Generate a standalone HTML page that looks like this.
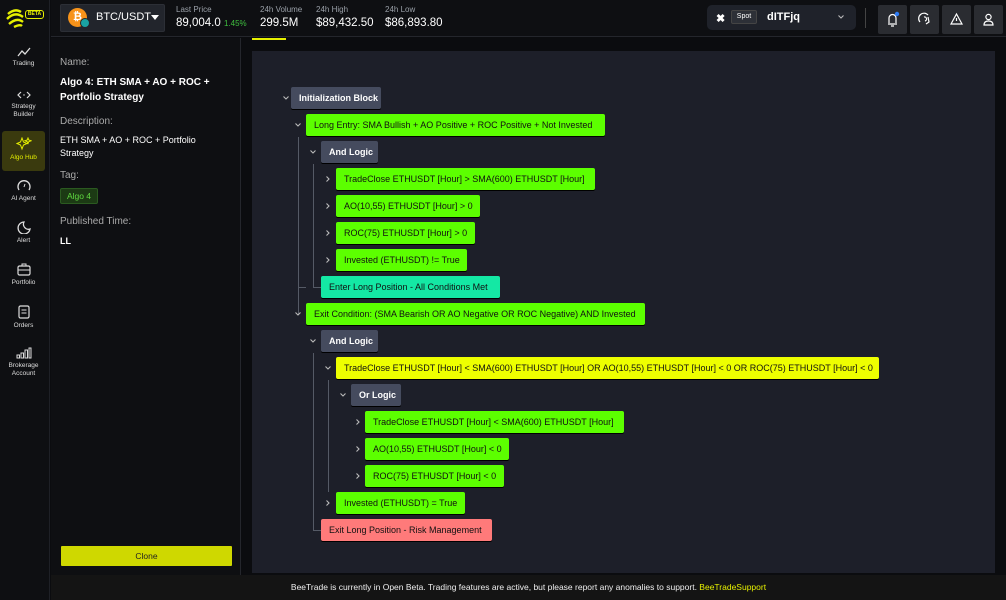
<!DOCTYPE html>
<html><head><meta charset="utf-8"><style>
*{box-sizing:border-box;margin:0;padding:0}
body{width:1006px;height:600px;background:#0b0c0f;font-family:"Liberation Sans",sans-serif;color:#fff;position:relative;overflow:hidden}
.abs{position:absolute}
.side{left:0;top:0;width:50px;height:600px;background:#0e0f12;border-right:1px solid #1e2026}
.nav{position:absolute;left:2px;width:43px;text-align:center;font-size:6.5px;color:#ddd;line-height:8px}
.nav svg{display:block;margin:0 auto 3px}
.top{left:51px;top:0;width:955px;height:37px;background:#0e0f12;border-bottom:1px solid #24262c}
.lbl{font-size:8px;color:#9aa0a8}
.val{font-size:11.5px;color:#fff}
.node{position:absolute;height:22px;border-radius:2px;font-size:9px;line-height:22px;padding-left:8px;color:#111;box-shadow:0 1px 0 #000}
.g{background:#5cff00}.gr{background:#454b5e;color:#fff;font-weight:bold}
.ch{position:absolute;width:8px;height:8px}
.vl{position:absolute;width:1px;background:#555a66}
.ib{width:29px;height:29px;background:#2a2c31;border-radius:2px;top:5px;position:absolute}
</style></head><body>
<svg width="0" height="0" style="position:absolute"><defs>
<symbol id="dn" viewBox="0 0 8 8"><path d="M1.5 2.5 L4 5 L6.5 2.5" stroke="#bbb" fill="none" stroke-width="1.1"/></symbol>
<symbol id="rt" viewBox="0 0 8 8"><path d="M2.5 1.5 L5 4 L2.5 6.5" stroke="#bbb" fill="none" stroke-width="1.1"/></symbol>
</defs></svg>
<div class="abs side">
 <svg class="abs" style="left:5px;top:8px" width="20" height="20" viewBox="0 0 20 20"><g fill="none" stroke="#e6f000" stroke-width="2.4"><path d="M3 6 Q10 0 16 4"/><path d="M2 11 Q10 3 18 9"/><path d="M4 16 Q12 9 18 14"/><path d="M9 19 Q15 16 17 18"/></g></svg>
 <div class="abs" style="left:25px;top:10px;width:19px;height:9px;border:1px solid #e6f000;border-radius:3px;font-size:5px;color:#e6f000;text-align:center;line-height:7px;font-weight:bold">BETA</div>
 <div class="nav" style="top:47px"><svg width="14" height="10"><path d="M1 9 L5 4 L8 7 L13 1" stroke="#ddd" fill="none" stroke-width="1.3"/></svg>Trading</div>
 <div class="nav" style="top:90px"><svg width="14" height="10"><path d="M4 2 L1 5 L4 8 M10 2 L13 5 L10 8" stroke="#ddd" fill="none" stroke-width="1.2"/><circle cx="7" cy="5" r=".7" fill="#ddd"/></svg>Strategy<br>Builder</div>
 <div class="abs" style="left:2px;top:131px;width:43px;height:40px;background:#3a3a0e;border-radius:3px"></div>
 <div class="nav" style="top:137px;color:#e6f000"><svg width="16" height="14"><path d="M6 1 L7.5 5 L11 6.5 L7.5 8 L6 12 L4.5 8 L1 6.5 L4.5 5Z M12 1 L12.8 3 L15 3.8 L12.8 4.6 L12 6.5 L11.2 4.6 L9 3.8 L11.2 3Z" stroke="#e6f000" fill="none" stroke-width="1"/></svg>Algo Hub</div>
 <div class="nav" style="top:180px"><svg width="14" height="12"><path d="M2 10 A6 6 0 1 1 12 10" stroke="#ddd" fill="none" stroke-width="1.3"/><path d="M7 7 L8 4" stroke="#ddd"/></svg>AI Agent</div>
 <div class="nav" style="top:221px"><svg width="14" height="13"><path d="M7 1 A6 6 0 1 0 13 8 A5 5 0 0 1 7 1Z" stroke="#ddd" fill="none" stroke-width="1.3"/></svg>Alert</div>
 <div class="nav" style="top:263px"><svg width="14" height="13"><rect x="1" y="3" width="12" height="9" rx="1.5" stroke="#ddd" fill="none" stroke-width="1.2"/><path d="M5 3V1h4v2M1 7h12" stroke="#ddd" fill="none"/></svg>Portfolio</div>
 <div class="nav" style="top:305px"><svg width="12" height="14"><rect x="1" y="1" width="10" height="12" rx="1.5" stroke="#ddd" fill="none" stroke-width="1.2"/><path d="M3.5 5h5M3.5 8h5" stroke="#ddd"/></svg>Orders</div>
 <div class="nav" style="top:347px"><svg width="16" height="12"><rect x="1" y="8" width="2.5" height="3" stroke="#ddd" fill="none"/><rect x="5" y="6" width="2.5" height="5" stroke="#ddd" fill="none"/><rect x="9" y="3" width="2.5" height="8" stroke="#ddd" fill="none"/><rect x="13" y="1" width="2" height="10" stroke="#ddd" fill="none"/></svg>Brokerage<br>Account</div>
</div>
<div class="abs top">
 <div class="abs" style="left:9px;top:4px;width:105px;height:28px;background:#22252c;border-radius:2px;border:1px solid #2c2f36"></div>
 <div class="abs" style="left:17px;top:8px;width:19px;height:19px;border-radius:50%;background:#f7931a;color:#fff;font-size:11px;font-weight:bold;text-align:center;line-height:19px">₿</div>
 <div class="abs" style="left:29px;top:18px;width:10px;height:10px;border-radius:50%;background:#1aa3a3;border:1px solid #22252c"></div>
 <div class="abs val" style="left:45px;top:11px;font-size:11px">BTC/USDT</div>
 <div class="abs" style="left:100px;top:15px;border:4px solid transparent;border-top:5px solid #fff"></div>
 <div class="abs lbl" style="left:125px;top:5px">Last Price</div>
 <div class="abs val" style="left:125px;top:17px">89,004.0 <span style="color:#3fbf3f;font-size:8px">1.45%</span></div>
 <div class="abs lbl" style="left:209px;top:5px">24h Volume</div>
 <div class="abs val" style="left:209px;top:17px">299.5M</div>
 <div class="abs lbl" style="left:265px;top:5px">24h High</div>
 <div class="abs val" style="left:265px;top:17px">$89,432.50</div>
 <div class="abs lbl" style="left:334px;top:5px">24h Low</div>
 <div class="abs val" style="left:334px;top:17px">$86,893.80</div>
 <div class="abs" style="left:656px;top:5px;width:149px;height:25px;background:#1f222a;border-radius:5px"></div>
 <div class="abs" style="left:665px;top:12px;font-size:11px;color:#fff;font-weight:bold">✖</div>
 <div class="abs" style="left:680px;top:10px;width:26px;height:14px;background:#2d3037;border:1px solid #444;border-radius:2px;font-size:7px;text-align:center;line-height:12px">Spot</div>
 <div class="abs" style="left:716px;top:11px;font-size:11px;font-weight:bold">dITFjq</div>
 <svg class="abs" style="left:786px;top:13px" width="8" height="8"><use href="#dn"/></svg>
 <div class="abs" style="left:814px;top:8px;width:1px;height:20px;background:#444"></div>
 <div class="ib" style="left:827px"><svg width="29" height="29"><path d="M10 19h9M11 18V13a3.5 3.5 0 0 1 7 0v5M13 21h3" stroke="#fff" fill="none" stroke-width="1.2"/><circle cx="19" cy="9" r="2.2" fill="#2f7cf6"/></svg></div>
 <div class="ib" style="left:859px"><svg width="29" height="29"><path d="M10 17 A5 5 0 0 1 18 10 M14 12a2 2 0 1 1 1 4M18 12 L19 17 L16 19" stroke="#fff" fill="none" stroke-width="1.2"/></svg></div>
 <div class="ib" style="left:891px"><svg width="29" height="29"><path d="M14.5 9 L20 19 H9Z M14.5 13v3" stroke="#fff" fill="none" stroke-width="1.2"/></svg></div>
 <div class="ib" style="left:923px"><svg width="29" height="29"><circle cx="14.5" cy="12" r="2.6" stroke="#fff" fill="none" stroke-width="1.2"/><path d="M10 20 Q10 16 14.5 16 Q19 16 19 20Z" stroke="#fff" fill="none" stroke-width="1.2"/></svg></div>
</div>
<div class="abs" style="left:51px;top:38px;width:190px;height:537px;background:#0e0f12;border-right:1px solid #24262c">
 <div class="abs" style="left:9px;top:19px;font-size:10px;color:#aaa">Name:</div>
 <div class="abs" style="left:9px;top:37px;width:170px;font-size:10px;font-weight:bold;line-height:15px">Algo 4: ETH SMA + AO + ROC + Portfolio Strategy</div>
 <div class="abs" style="left:9px;top:78px;font-size:10px;color:#aaa">Description:</div>
 <div class="abs" style="left:9px;top:96px;width:150px;font-size:9px;line-height:13px">ETH SMA + AO + ROC + Portfolio Strategy</div>
 <div class="abs" style="left:9px;top:132px;font-size:10px;color:#aaa">Tag:</div>
 <div class="abs" style="left:9px;top:150px;width:38px;height:16px;background:#1c3a14;border:1px solid #2b5a20;border-radius:2px;color:#5fd840;font-size:8.5px;text-align:center;line-height:14px">Algo 4</div>
 <div class="abs" style="left:9px;top:178px;font-size:10px;color:#aaa">Published Time:</div>
 <div class="abs" style="left:9px;top:198px;font-size:9px;font-weight:bold">LL</div>
 <div class="abs" style="left:10px;top:508px;width:171px;height:20px;background:#cfd800;color:#222;font-size:8.5px;text-align:center;line-height:20px;border-radius:1px">Clone</div>
</div>
<div class="abs" style="left:252px;top:38px;width:34px;height:2px;background:#e6f000"></div>
<div class="abs" style="left:252px;top:51px;width:743px;height:522px;background:#1d1f29"></div>

<div class="vl" style="left:298px;top:137px;height:178px"></div>
<div class="vl" style="left:313px;top:164px;height:123px"></div>
<div class="vl" style="left:313px;top:353px;height:178px"></div>
<div class="vl" style="left:328px;top:380px;height:112px"></div>
<div class="abs" style="left:298px;top:287px;width:8px;height:1px;background:#555a66"></div>
<div class="abs" style="left:313px;top:287px;width:8px;height:1px;background:#555a66"></div>
<div class="abs" style="left:313px;top:530px;width:8px;height:1px;background:#555a66"></div>

<svg class="ch" style="left:282px;top:94px"><use href="#dn"/></svg><div class="node gr" style="left:291px;top:87px;width:90px">Initialization Block</div>
<svg class="ch" style="left:294px;top:121px"><use href="#dn"/></svg><div class="node g" style="left:306px;top:114px;width:299px">Long Entry: SMA Bullish + AO Positive + ROC Positive + Not Invested</div>
<svg class="ch" style="left:309px;top:148px"><use href="#dn"/></svg><div class="node gr" style="left:321px;top:141px;width:57px">And Logic</div>
<svg class="ch" style="left:324px;top:175px"><use href="#rt"/></svg><div class="node g" style="left:336px;top:168px;width:259px">TradeClose ETHUSDT [Hour] &gt; SMA(600) ETHUSDT [Hour]</div>
<svg class="ch" style="left:324px;top:202px"><use href="#rt"/></svg><div class="node g" style="left:336px;top:195px;width:144px">AO(10,55) ETHUSDT [Hour] &gt; 0</div>
<svg class="ch" style="left:324px;top:229px"><use href="#rt"/></svg><div class="node g" style="left:336px;top:222px;width:139px">ROC(75) ETHUSDT [Hour] &gt; 0</div>
<svg class="ch" style="left:324px;top:256px"><use href="#rt"/></svg><div class="node g" style="left:336px;top:249px;width:131px">Invested (ETHUSDT) != True</div>
<div class="node" style="left:321px;top:276px;width:179px;background:#14e8a4">Enter Long Position - All Conditions Met</div>
<svg class="ch" style="left:294px;top:310px"><use href="#dn"/></svg><div class="node g" style="left:306px;top:303px;width:339px">Exit Condition: (SMA Bearish OR AO Negative OR ROC Negative) AND Invested</div>
<svg class="ch" style="left:309px;top:337px"><use href="#dn"/></svg><div class="node gr" style="left:321px;top:330px;width:57px">And Logic</div>
<svg class="ch" style="left:324px;top:364px"><use href="#dn"/></svg><div class="node" style="left:336px;top:357px;width:543px;background:#eeff00">TradeClose ETHUSDT [Hour] &lt; SMA(600) ETHUSDT [Hour] OR AO(10,55) ETHUSDT [Hour] &lt; 0 OR ROC(75) ETHUSDT [Hour] &lt; 0</div>
<svg class="ch" style="left:339px;top:391px"><use href="#dn"/></svg><div class="node gr" style="left:351px;top:384px;width:50px">Or Logic</div>
<svg class="ch" style="left:354px;top:418px"><use href="#rt"/></svg><div class="node g" style="left:365px;top:411px;width:259px">TradeClose ETHUSDT [Hour] &lt; SMA(600) ETHUSDT [Hour]</div>
<svg class="ch" style="left:354px;top:445px"><use href="#rt"/></svg><div class="node g" style="left:365px;top:438px;width:144px">AO(10,55) ETHUSDT [Hour] &lt; 0</div>
<svg class="ch" style="left:354px;top:472px"><use href="#rt"/></svg><div class="node g" style="left:365px;top:465px;width:139px">ROC(75) ETHUSDT [Hour] &lt; 0</div>
<svg class="ch" style="left:324px;top:499px"><use href="#rt"/></svg><div class="node g" style="left:336px;top:492px;width:129px">Invested (ETHUSDT) = True</div>
<div class="node" style="left:321px;top:519px;width:171px;background:#ff7a7a">Exit Long Position - Risk Management</div>

<div class="abs" style="left:51px;top:575px;width:955px;height:25px;background:#141414;font-size:8.5px;text-align:center;line-height:25px;color:#eee">BeeTrade is currently in Open Beta. Trading features are active, but please report any anomalies to support. <span style="color:#e6f000">BeeTradeSupport</span></div>
</body></html>
